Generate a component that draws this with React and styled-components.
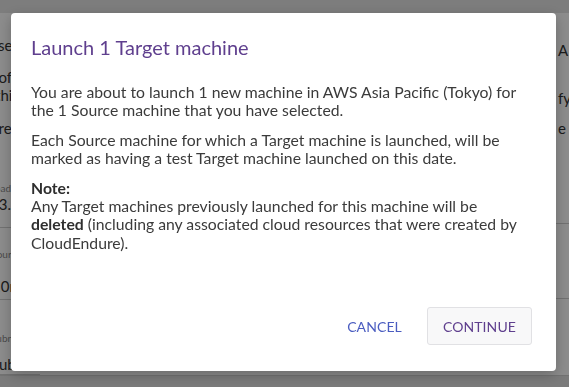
import React from 'react';
import styled, { createGlobalStyle } from 'styled-components';

const GlobalStyle = createGlobalStyle`
	html, body {
		margin: 0;
		padding: 0;
		height: 100%;
		overflow: hidden;
	}
	body {
		font-family: Lato, 'Open Sans', sans-serif;
		color: #333;
	}
`;

const Page = styled.div`
	height: 387px;
	background-color: #fff;
	display: flex;
	flex-direction: column;
`;

const TopBar = styled.div`
	height: 13px;
	flex-shrink: 0;
	background-color: #e4e4e4;
`;

const Body = styled.div`
	flex: 1;
	display: flex;
	justify-content: space-between;
`;

const Column = styled.div`
	width: ${props => props.width}px;
	overflow: hidden;
	display: flex;
	flex-direction: column;
`;

const Block = styled.div`
	margin-left: ${props => props.shift || 0}px;
	padding-top: ${props => props.top || 0}px;
	padding-bottom: ${props => props.bottom || 0}px;
	border-bottom: ${props => (props.line ? '1px solid #cfcfcf' : 'none')};
	white-space: nowrap;
`;

const Faint = styled.div`
	font-size: 10px;
	color: #8a8a8a;
	line-height: 14px;
`;

const Plain = styled.div`
	font-size: 15px;
	line-height: 18px;
	margin-top: ${props => props.gap || 0}px;
`;

const Footer = styled.div`
	flex-shrink: 0;
	height: 11px;
	background-color: #e0e0e0;
	border-top: 1px solid #d0d0d0;
`;

const Overlay = styled.div`
	position: fixed;
	inset: 0;
	background-color: rgba(0, 0, 0, 0.45);
`;

const Dialog = styled.div`
	position: fixed;
	left: 11px;
	top: 13px;
	width: 545px;
	height: 358px;
	box-sizing: border-box;
	background-color: #fff;
	border-radius: 4px;
	box-shadow: 0 4px 14px rgba(0, 0, 0, 0.25);
	display: flex;
	flex-direction: column;
	padding: 22px 24px 26px 20px;
`;

const Title = styled.h2`
	margin: 0;
	font-size: 20px;
	font-weight: 400;
	line-height: 24px;
	color: #5f3f8e;
`;

const Content = styled.div`
	margin-top: 24px;
	flex: 1;
	font-size: 15.75px;
	line-height: 18.4px;
	color: #3b3b3b;

	p {
		margin: 0 0 11px;
	}

	b {
		font-weight: 700;
		color: #2e2e2e;
	}
`;

const Actions = styled.div`
	display: flex;
	justify-content: flex-end;
	align-items: center;
	gap: 24px;
`;

const Button = styled.button`
	font-family: Lato, 'Open Sans', sans-serif;
	font-size: 14px;
	text-transform: uppercase;
	letter-spacing: 0.1px;
	height: 38px;
	padding: 0 ${props => (props.boxed ? 15 : 0)}px;
	border-radius: 3px;
	cursor: pointer;
	color: ${props => (props.boxed ? '#5f3f8e' : '#4a5cc0')};
	background-color: ${props => (props.boxed ? '#f8f8f9' : 'transparent')};
	border: 1px solid ${props => (props.boxed ? '#e1e1e4' : 'transparent')};
`;

const App = () => {
	return (
		<>
			<GlobalStyle />
			<Page>
				<TopBar />
				<Body>
					<Column width={40}>
						<Block shift={-24} top={23}>
							<Plain>Close</Plain>
							<Plain gap={14}>Proof</Plain>
							<Plain>Within</Plain>
							<Plain gap={15}>Were</Plain>
						</Block>
						<Block shift={-10} top={44} line bottom={14}>
							<Faint>Load</Faint>
							<Plain>23.</Plain>
						</Block>
						<Block shift={-8} top={19} line bottom={4}>
							<Faint>Tour</Faint>
							<Plain gap={16}>10m</Plain>
						</Block>
						<Block shift={-9} top={31} line bottom={1}>
							<Faint>Subn</Faint>
							<Plain gap={10}>Sub</Plain>
						</Block>
					</Column>
					<Column width={13}>
						<Block shift={2} top={28}>
							<Plain>A</Plain>
							<Plain gap={30}>fy</Plain>
							<Plain gap={12}>e</Plain>
						</Block>
						<Block top={86} line />
						<Block top={74} line />
					</Column>
				</Body>
				<Footer />
			</Page>
			<Overlay />
			<Dialog>
				<Title>Launch 1 Target machine</Title>
				<Content>
					<p>
						You are about to launch 1 new machine in AWS Asia Pacific (Tokyo) for
						the 1 Source machine that you have selected.
					</p>
					<p>
						Each Source machine for which a Target machine is launched, will be
						marked as having a test Target machine launched on this date.
					</p>
					<p>
						<b>Note:</b>
						<br />
						Any Target machines previously launched for this machine will be{' '}
						<b>deleted</b> (including any associated cloud resources that were
						created by CloudEndure).
					</p>
				</Content>
				<Actions>
					<Button>Cancel</Button>
					<Button boxed>Continue</Button>
				</Actions>
			</Dialog>
		</>
	);
};

export default App;
